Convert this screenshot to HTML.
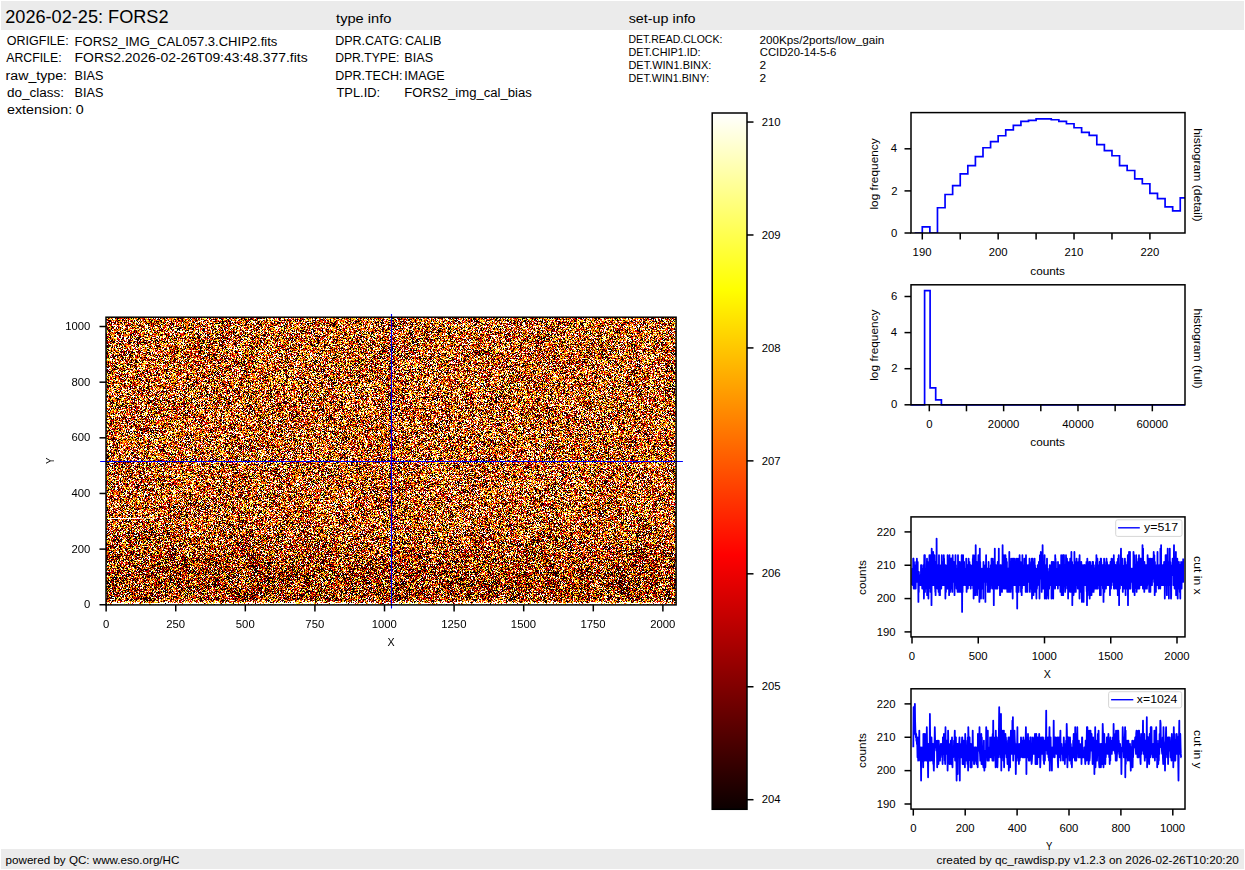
<!DOCTYPE html>
<html><head><meta charset="utf-8"><style>
html,body{margin:0;padding:0;background:#fff;width:1245px;height:870px;overflow:hidden}
svg{display:block;font-family:"Liberation Sans",sans-serif}
</style></head><body>
<svg width="1245" height="870" viewBox="0 0 1245 870">
<rect x="1" y="1" width="1243" height="29" fill="#ebebeb"/>
<rect x="1" y="849" width="1243" height="20" fill="#ebebeb"/>
<text x="5.25" y="23.10" font-size="17.50" textLength="163.28" lengthAdjust="spacingAndGlyphs" fill="#000">2026-02-25: FORS2</text>
<text x="336.09" y="22.70" font-size="13.12" textLength="55.34" lengthAdjust="spacingAndGlyphs" fill="#000">type info</text>
<text x="628.71" y="23.00" font-size="13.12" textLength="66.89" lengthAdjust="spacingAndGlyphs" fill="#000">set-up info</text>
<text x="6.81" y="45.20" font-size="13.12" textLength="61.85" lengthAdjust="spacingAndGlyphs" fill="#000">ORIGFILE:</text>
<text x="74.55" y="45.70" font-size="13.12" textLength="202.83" lengthAdjust="spacingAndGlyphs" fill="#000">FORS2_IMG_CAL057.3.CHIP2.fits</text>
<text x="6.28" y="61.70" font-size="13.12" textLength="55.29" lengthAdjust="spacingAndGlyphs" fill="#000">ARCFILE:</text>
<text x="74.55" y="61.70" font-size="13.12" textLength="233.10" lengthAdjust="spacingAndGlyphs" fill="#000">FORS2.2026-02-26T09:43:48.377.fits</text>
<text x="5.58" y="79.70" font-size="13.12" textLength="61.41" lengthAdjust="spacingAndGlyphs" fill="#000">raw_type:</text>
<text x="74.55" y="79.70" font-size="13.12" textLength="28.75" lengthAdjust="spacingAndGlyphs" fill="#000">BIAS</text>
<text x="7.01" y="97.10" font-size="13.12" textLength="57.08" lengthAdjust="spacingAndGlyphs" fill="#000">do_class:</text>
<text x="74.55" y="97.10" font-size="13.12" textLength="28.75" lengthAdjust="spacingAndGlyphs" fill="#000">BIAS</text>
<text x="7.01" y="113.50" font-size="13.12" textLength="65.15" lengthAdjust="spacingAndGlyphs" fill="#000">extension:</text>
<text x="75.89" y="113.50" font-size="13.12" textLength="7.95" lengthAdjust="spacingAndGlyphs" fill="#000">0</text>
<text x="335.15" y="45.00" font-size="13.12" textLength="67.22" lengthAdjust="spacingAndGlyphs" fill="#000">DPR.CATG:</text>
<text x="404.91" y="45.00" font-size="13.12" textLength="36.50" lengthAdjust="spacingAndGlyphs" fill="#000">CALIB</text>
<text x="335.15" y="61.80" font-size="13.12" textLength="64.30" lengthAdjust="spacingAndGlyphs" fill="#000">DPR.TYPE:</text>
<text x="404.35" y="61.80" font-size="13.12" textLength="28.75" lengthAdjust="spacingAndGlyphs" fill="#000">BIAS</text>
<text x="335.15" y="79.50" font-size="13.12" textLength="67.25" lengthAdjust="spacingAndGlyphs" fill="#000">DPR.TECH:</text>
<text x="404.35" y="79.50" font-size="13.12" textLength="40.39" lengthAdjust="spacingAndGlyphs" fill="#000">IMAGE</text>
<text x="336.46" y="96.90" font-size="13.12" textLength="43.63" lengthAdjust="spacingAndGlyphs" fill="#000">TPL.ID:</text>
<text x="404.35" y="97.40" font-size="13.12" textLength="127.52" lengthAdjust="spacingAndGlyphs" fill="#000">FORS2_img_cal_bias</text>
<text x="628.46" y="42.70" font-size="10.94" textLength="93.87" lengthAdjust="spacingAndGlyphs" fill="#000">DET.READ.CLOCK:</text>
<text x="759.52" y="43.80" font-size="10.94" textLength="124.71" lengthAdjust="spacingAndGlyphs" fill="#000">200Kps/2ports/low_gain</text>
<text x="628.46" y="55.90" font-size="10.94" textLength="72.07" lengthAdjust="spacingAndGlyphs" fill="#000">DET.CHIP1.ID:</text>
<text x="759.73" y="55.60" font-size="10.94" textLength="76.71" lengthAdjust="spacingAndGlyphs" fill="#000">CCID20-14-5-6</text>
<text x="628.46" y="68.80" font-size="10.94" textLength="82.83" lengthAdjust="spacingAndGlyphs" fill="#000">DET.WIN1.BINX:</text>
<text x="759.52" y="68.80" font-size="10.94" textLength="6.63" lengthAdjust="spacingAndGlyphs" fill="#000">2</text>
<text x="628.46" y="81.70" font-size="10.94" textLength="80.67" lengthAdjust="spacingAndGlyphs" fill="#000">DET.WIN1.BINY:</text>
<text x="759.52" y="81.70" font-size="10.94" textLength="6.63" lengthAdjust="spacingAndGlyphs" fill="#000">2</text>
<text x="5.55" y="863.80" font-size="11.08" textLength="173.83" lengthAdjust="spacingAndGlyphs" fill="#000">powered by QC: www.eso.org/HC</text>
<text x="936.55" y="863.80" font-size="10.92" textLength="302.23" lengthAdjust="spacingAndGlyphs" fill="#000">created by qc_rawdisp.py v1.2.3 on 2026-02-26T10:20:20</text>
<defs><linearGradient id="hmfb" x1="0" y1="0" x2="0" y2="1"><stop offset="0" stop-color="rgb(183,108,56)"/><stop offset="0.70" stop-color="rgb(182,108,56)"/><stop offset="0.77" stop-color="rgb(171,97,48)"/><stop offset="0.84" stop-color="rgb(161,85,39)"/><stop offset="0.89" stop-color="rgb(154,80,36)"/><stop offset="0.97" stop-color="rgb(157,82,37)"/><stop offset="1" stop-color="rgb(200,140,92)"/></linearGradient></defs>
<rect x="106" y="317" width="570" height="288" fill="url(#hmfb)"/>
<foreignObject x="106" y="317" width="570" height="288"><canvas id="hm" width="570" height="288" style="display:block;width:570px;height:288px"></canvas></foreignObject>
<line x1="107" y1="518.5" x2="140" y2="518.5" stroke="#fff" stroke-width="1"/><line x1="140" y1="518.5" x2="157" y2="518.5" stroke="#fff" stroke-opacity="0.5" stroke-width="1"/>
<line x1="391.50" y1="314.00" x2="391.50" y2="608.60" stroke="#0000ff" stroke-width="1.1"/>
<line x1="100.10" y1="461.50" x2="682.90" y2="461.50" stroke="#0000ff" stroke-width="1.1"/>
<rect x="106.0" y="317.2" width="570.10" height="287.70" fill="none" stroke="#000" stroke-width="1.5"/>
<line x1="106.14" y1="604.90" x2="106.14" y2="611.40" stroke="#000" stroke-width="1.5"/>
<text x="103.00" y="628.00" font-size="10.40" textLength="6.30" lengthAdjust="spacingAndGlyphs" fill="#000">0</text>
<line x1="175.73" y1="604.90" x2="175.73" y2="611.40" stroke="#000" stroke-width="1.5"/>
<text x="166.23" y="628.00" font-size="10.40" textLength="18.90" lengthAdjust="spacingAndGlyphs" fill="#000">250</text>
<line x1="245.32" y1="604.90" x2="245.32" y2="611.40" stroke="#000" stroke-width="1.5"/>
<text x="235.82" y="628.00" font-size="10.40" textLength="18.90" lengthAdjust="spacingAndGlyphs" fill="#000">500</text>
<line x1="314.92" y1="604.90" x2="314.92" y2="611.40" stroke="#000" stroke-width="1.5"/>
<text x="305.39" y="628.00" font-size="10.40" textLength="18.90" lengthAdjust="spacingAndGlyphs" fill="#000">750</text>
<line x1="384.51" y1="604.90" x2="384.51" y2="611.40" stroke="#000" stroke-width="1.5"/>
<text x="371.69" y="628.00" font-size="10.40" textLength="25.20" lengthAdjust="spacingAndGlyphs" fill="#000">1000</text>
<line x1="454.10" y1="604.90" x2="454.10" y2="611.40" stroke="#000" stroke-width="1.5"/>
<text x="441.28" y="628.00" font-size="10.40" textLength="25.20" lengthAdjust="spacingAndGlyphs" fill="#000">1250</text>
<line x1="523.69" y1="604.90" x2="523.69" y2="611.40" stroke="#000" stroke-width="1.5"/>
<text x="510.87" y="628.00" font-size="10.40" textLength="25.20" lengthAdjust="spacingAndGlyphs" fill="#000">1500</text>
<line x1="593.29" y1="604.90" x2="593.29" y2="611.40" stroke="#000" stroke-width="1.5"/>
<text x="580.46" y="628.00" font-size="10.40" textLength="25.20" lengthAdjust="spacingAndGlyphs" fill="#000">1750</text>
<line x1="662.88" y1="604.90" x2="662.88" y2="611.40" stroke="#000" stroke-width="1.5"/>
<text x="650.23" y="628.00" font-size="10.40" textLength="25.20" lengthAdjust="spacingAndGlyphs" fill="#000">2000</text>
<line x1="99.50" y1="604.76" x2="106.00" y2="604.76" stroke="#000" stroke-width="1.5"/>
<text x="84.06" y="608.41" font-size="10.40" textLength="6.30" lengthAdjust="spacingAndGlyphs" fill="#000">0</text>
<line x1="99.50" y1="549.11" x2="106.00" y2="549.11" stroke="#000" stroke-width="1.5"/>
<text x="71.43" y="552.76" font-size="10.40" textLength="18.90" lengthAdjust="spacingAndGlyphs" fill="#000">200</text>
<line x1="99.50" y1="493.46" x2="106.00" y2="493.46" stroke="#000" stroke-width="1.5"/>
<text x="71.43" y="497.11" font-size="10.40" textLength="18.90" lengthAdjust="spacingAndGlyphs" fill="#000">400</text>
<line x1="99.50" y1="437.82" x2="106.00" y2="437.82" stroke="#000" stroke-width="1.5"/>
<text x="71.43" y="441.47" font-size="10.40" textLength="18.90" lengthAdjust="spacingAndGlyphs" fill="#000">600</text>
<line x1="99.50" y1="382.17" x2="106.00" y2="382.17" stroke="#000" stroke-width="1.5"/>
<text x="71.43" y="385.82" font-size="10.40" textLength="18.90" lengthAdjust="spacingAndGlyphs" fill="#000">800</text>
<line x1="99.50" y1="326.52" x2="106.00" y2="326.52" stroke="#000" stroke-width="1.5"/>
<text x="65.15" y="330.17" font-size="10.40" textLength="25.20" lengthAdjust="spacingAndGlyphs" fill="#000">1000</text>
<text x="387.44" y="646.30" font-size="10.92" textLength="7.12" lengthAdjust="spacingAndGlyphs" fill="#000">X</text>
<text transform="translate(54.00,460.80) rotate(-90)" x="-3.17" y="0" font-size="10.92" textLength="6.35" lengthAdjust="spacingAndGlyphs" fill="#000">Y</text>
<defs><linearGradient id="hot" x1="0" y1="1" x2="0" y2="0"><stop offset="0" stop-color="rgb(11,0,0)"/><stop offset="0.365079" stop-color="rgb(255,0,0)"/><stop offset="0.746032" stop-color="rgb(255,255,0)"/><stop offset="1" stop-color="rgb(255,255,255)"/></linearGradient></defs>
<rect x="712.2" y="113.0" width="34.80" height="696.30" fill="url(#hot)" stroke="#000" stroke-width="1.5"/>
<line x1="747.00" y1="799.70" x2="753.50" y2="799.70" stroke="#000" stroke-width="1.5"/>
<text x="761.76" y="803.35" font-size="10.40" textLength="18.90" lengthAdjust="spacingAndGlyphs" fill="#000">204</text>
<line x1="747.00" y1="686.76" x2="753.50" y2="686.76" stroke="#000" stroke-width="1.5"/>
<text x="761.76" y="690.41" font-size="10.40" textLength="18.90" lengthAdjust="spacingAndGlyphs" fill="#000">205</text>
<line x1="747.00" y1="573.81" x2="753.50" y2="573.81" stroke="#000" stroke-width="1.5"/>
<text x="761.76" y="577.46" font-size="10.40" textLength="18.90" lengthAdjust="spacingAndGlyphs" fill="#000">206</text>
<line x1="747.00" y1="460.87" x2="753.50" y2="460.87" stroke="#000" stroke-width="1.5"/>
<text x="761.76" y="464.52" font-size="10.40" textLength="18.90" lengthAdjust="spacingAndGlyphs" fill="#000">207</text>
<line x1="747.00" y1="347.92" x2="753.50" y2="347.92" stroke="#000" stroke-width="1.5"/>
<text x="761.76" y="351.57" font-size="10.40" textLength="18.90" lengthAdjust="spacingAndGlyphs" fill="#000">208</text>
<line x1="747.00" y1="234.98" x2="753.50" y2="234.98" stroke="#000" stroke-width="1.5"/>
<text x="761.76" y="238.63" font-size="10.40" textLength="18.90" lengthAdjust="spacingAndGlyphs" fill="#000">209</text>
<line x1="747.00" y1="122.04" x2="753.50" y2="122.04" stroke="#000" stroke-width="1.5"/>
<text x="761.76" y="125.69" font-size="10.40" textLength="18.90" lengthAdjust="spacingAndGlyphs" fill="#000">210</text>
<svg x="911.0" y="112.6" width="274.0" height="120.40" viewBox="911.0 112.6 274.0 120.40" overflow="hidden"><path d="M914.71,233.00 V233.00 H922.29 V226.90 H929.88 V233.00 H937.47 V207.74 H945.06 V194.48 H952.64 V185.64 H960.23 V173.85 H967.82 V165.64 H975.40 V156.59 H982.99 V147.75 H990.58 V141.64 H998.16 V135.75 H1005.75 V129.85 H1013.34 V125.43 H1020.93 V121.44 H1028.51 V120.38 H1036.10 V118.91 H1043.69 V118.91 H1051.27 V119.75 H1058.86 V121.44 H1066.45 V123.75 H1074.03 V127.75 H1081.62 V132.38 H1089.21 V135.33 H1096.80 V144.59 H1104.38 V150.69 H1111.97 V155.75 H1119.56 V165.64 H1127.14 V170.48 H1134.73 V178.90 H1142.32 V183.74 H1149.90 V193.43 H1157.49 V198.69 H1165.08 V206.90 H1172.67 V210.90 H1180.25 V197.85 H1187.84 V203.53 H1195.43" fill="none" stroke="#0000ff" stroke-width="1.7" stroke-linejoin="miter"/></svg>
<rect x="911.0" y="112.6" width="274.0" height="120.40" fill="none" stroke="#000" stroke-width="1.5"/>
<line x1="922.29" y1="233.00" x2="922.29" y2="239.50" stroke="#000" stroke-width="1.5"/>
<text x="912.62" y="256.10" font-size="10.40" textLength="18.90" lengthAdjust="spacingAndGlyphs" fill="#000">190</text>
<line x1="960.23" y1="233.00" x2="960.23" y2="239.50" stroke="#000" stroke-width="1.5"/>
<line x1="998.16" y1="233.00" x2="998.16" y2="239.50" stroke="#000" stroke-width="1.5"/>
<text x="988.66" y="256.10" font-size="10.40" textLength="18.90" lengthAdjust="spacingAndGlyphs" fill="#000">200</text>
<line x1="1036.10" y1="233.00" x2="1036.10" y2="239.50" stroke="#000" stroke-width="1.5"/>
<line x1="1074.03" y1="233.00" x2="1074.03" y2="239.50" stroke="#000" stroke-width="1.5"/>
<text x="1064.53" y="256.10" font-size="10.40" textLength="18.90" lengthAdjust="spacingAndGlyphs" fill="#000">210</text>
<line x1="1111.97" y1="233.00" x2="1111.97" y2="239.50" stroke="#000" stroke-width="1.5"/>
<line x1="1149.90" y1="233.00" x2="1149.90" y2="239.50" stroke="#000" stroke-width="1.5"/>
<text x="1140.40" y="256.10" font-size="10.40" textLength="18.90" lengthAdjust="spacingAndGlyphs" fill="#000">220</text>
<line x1="904.50" y1="233.00" x2="911.00" y2="233.00" stroke="#000" stroke-width="1.5"/>
<text x="890.96" y="236.65" font-size="10.40" textLength="6.30" lengthAdjust="spacingAndGlyphs" fill="#000">0</text>
<line x1="904.50" y1="190.90" x2="911.00" y2="190.90" stroke="#000" stroke-width="1.5"/>
<text x="891.30" y="194.55" font-size="10.40" textLength="6.30" lengthAdjust="spacingAndGlyphs" fill="#000">2</text>
<line x1="904.50" y1="148.80" x2="911.00" y2="148.80" stroke="#000" stroke-width="1.5"/>
<text x="890.86" y="152.45" font-size="10.40" textLength="6.30" lengthAdjust="spacingAndGlyphs" fill="#000">4</text>
<text x="1030.28" y="274.50" font-size="10.92" textLength="34.76" lengthAdjust="spacingAndGlyphs" fill="#000">counts</text>
<text transform="translate(877.80,173.60) rotate(-90)" x="-35.98" y="0" font-size="10.92" textLength="71.32" lengthAdjust="spacingAndGlyphs" fill="#000">log frequency</text>
<text transform="translate(1194.30,175.00) rotate(90)" x="-46.72" y="0" font-size="10.92" textLength="93.37" lengthAdjust="spacingAndGlyphs" fill="#000">histogram (detail)</text>
<path d="M911.00,404.80 H924.6 V290.72 H930.1 V387.83 H935.7 V399.93 H941.4 V404.80 H1185.0" fill="none" stroke="#0000ff" stroke-width="1.7"/>
<rect x="911.0" y="284.8" width="274.0" height="120.00" fill="none" stroke="#000" stroke-width="1.5"/>
<line x1="929.30" y1="404.80" x2="929.30" y2="411.30" stroke="#000" stroke-width="1.5"/>
<text x="926.16" y="428.20" font-size="10.40" textLength="6.30" lengthAdjust="spacingAndGlyphs" fill="#000">0</text>
<line x1="966.47" y1="404.80" x2="966.47" y2="411.30" stroke="#000" stroke-width="1.5"/>
<line x1="1003.64" y1="404.80" x2="1003.64" y2="411.30" stroke="#000" stroke-width="1.5"/>
<text x="987.85" y="428.20" font-size="10.40" textLength="31.49" lengthAdjust="spacingAndGlyphs" fill="#000">20000</text>
<line x1="1040.81" y1="404.80" x2="1040.81" y2="411.30" stroke="#000" stroke-width="1.5"/>
<line x1="1077.98" y1="404.80" x2="1077.98" y2="411.30" stroke="#000" stroke-width="1.5"/>
<text x="1062.31" y="428.20" font-size="10.40" textLength="31.49" lengthAdjust="spacingAndGlyphs" fill="#000">40000</text>
<line x1="1115.15" y1="404.80" x2="1115.15" y2="411.30" stroke="#000" stroke-width="1.5"/>
<line x1="1152.32" y1="404.80" x2="1152.32" y2="411.30" stroke="#000" stroke-width="1.5"/>
<text x="1136.55" y="428.20" font-size="10.40" textLength="31.49" lengthAdjust="spacingAndGlyphs" fill="#000">60000</text>
<line x1="904.50" y1="404.80" x2="911.00" y2="404.80" stroke="#000" stroke-width="1.5"/>
<text x="890.96" y="408.45" font-size="10.40" textLength="6.30" lengthAdjust="spacingAndGlyphs" fill="#000">0</text>
<line x1="904.50" y1="368.70" x2="911.00" y2="368.70" stroke="#000" stroke-width="1.5"/>
<text x="891.30" y="372.35" font-size="10.40" textLength="6.30" lengthAdjust="spacingAndGlyphs" fill="#000">2</text>
<line x1="904.50" y1="332.60" x2="911.00" y2="332.60" stroke="#000" stroke-width="1.5"/>
<text x="890.86" y="336.25" font-size="10.40" textLength="6.30" lengthAdjust="spacingAndGlyphs" fill="#000">4</text>
<line x1="904.50" y1="296.50" x2="911.00" y2="296.50" stroke="#000" stroke-width="1.5"/>
<text x="890.91" y="300.15" font-size="10.40" textLength="6.30" lengthAdjust="spacingAndGlyphs" fill="#000">6</text>
<text x="1030.28" y="446.30" font-size="10.92" textLength="34.76" lengthAdjust="spacingAndGlyphs" fill="#000">counts</text>
<text transform="translate(877.80,344.80) rotate(-90)" x="-35.98" y="0" font-size="10.92" textLength="71.32" lengthAdjust="spacingAndGlyphs" fill="#000">log frequency</text>
<text transform="translate(1194.30,348.50) rotate(90)" x="-40.12" y="0" font-size="10.92" textLength="80.18" lengthAdjust="spacingAndGlyphs" fill="#000">histogram (full)</text>
<svg x="911.0" y="516.9" width="274.0" height="120.00" viewBox="911.0 516.9 274.0 120.00" overflow="hidden"><polyline points="912.0,585.2 912.1,581.9 912.3,568.6 912.4,571.9 912.5,578.6 912.7,581.9 912.8,575.2 912.9,585.2 913.1,571.9 913.2,558.6 913.3,581.9 913.5,558.6 913.6,571.9 913.7,588.6 913.9,578.6 914.0,561.9 914.1,571.9 914.3,581.9 914.4,568.6 914.5,585.2 914.6,588.6 914.8,585.2 914.9,581.9 915.0,578.6 915.2,581.9 915.3,565.2 915.4,585.2 915.6,588.6 915.7,588.6 915.8,575.2 916.0,565.2 916.1,571.9 916.2,561.9 916.4,568.6 916.5,565.2 916.6,561.9 916.8,575.2 916.9,558.6 917.0,575.2 917.2,581.9 917.3,578.6 917.4,571.9 917.6,581.9 917.7,561.9 917.8,581.9 918.0,581.9 918.1,581.9 918.2,578.6 918.4,601.9 918.5,571.9 918.6,581.9 918.8,591.9 918.9,571.9 919.0,585.2 919.2,581.9 919.3,578.6 919.4,585.2 919.6,585.2 919.7,575.2 919.8,575.2 920.0,581.9 920.1,581.9 920.2,581.9 920.3,581.9 920.5,575.2 920.6,585.2 920.7,575.2 920.9,581.9 921.0,565.2 921.1,585.2 921.3,565.2 921.4,585.2 921.5,568.6 921.7,571.9 921.8,585.2 921.9,568.6 922.1,581.9 922.2,588.6 922.3,571.9 922.5,575.2 922.6,571.9 922.7,585.2 922.9,581.9 923.0,571.9 923.1,588.6 923.3,565.2 923.4,578.6 923.5,571.9 923.7,581.9 923.8,585.2 923.9,598.6 924.1,585.2 924.2,565.2 924.3,555.2 924.5,578.6 924.6,578.6 924.7,581.9 924.9,555.2 925.0,591.9 925.1,578.6 925.2,585.2 925.4,581.9 925.5,568.6 925.6,585.2 925.8,575.2 925.9,578.6 926.0,575.2 926.2,581.9 926.3,581.9 926.4,581.9 926.6,588.6 926.7,575.2 926.8,565.2 927.0,558.6 927.1,595.2 927.2,561.9 927.4,588.6 927.5,568.6 927.6,561.9 927.8,585.2 927.9,581.9 928.0,578.6 928.2,578.6 928.3,575.2 928.4,598.6 928.6,578.6 928.7,565.2 928.8,588.6 929.0,575.2 929.1,575.2 929.2,568.6 929.4,555.2 929.5,571.9 929.6,581.9 929.8,571.9 929.9,578.6 930.0,568.6 930.2,571.9 930.3,555.2 930.4,565.2 930.5,591.9 930.7,581.9 930.8,565.2 930.9,571.9 931.1,581.9 931.2,591.9 931.3,568.6 931.5,605.2 931.6,588.6 931.7,548.6 931.9,568.6 932.0,565.2 932.1,575.2 932.3,585.2 932.4,575.2 932.5,578.6 932.7,585.2 932.8,585.2 932.9,581.9 933.1,558.6 933.2,551.9 933.3,571.9 933.5,568.6 933.6,568.6 933.7,575.2 933.9,585.2 934.0,565.2 934.1,565.2 934.3,571.9 934.4,561.9 934.5,555.2 934.7,575.2 934.8,568.6 934.9,571.9 935.1,588.6 935.2,581.9 935.3,591.9 935.5,561.9 935.6,595.2 935.7,575.2 935.9,585.2 936.0,585.2 936.1,585.2 936.2,565.2 936.4,575.2 936.5,581.9 936.6,538.6 936.8,575.2 936.9,581.9 937.0,578.6 937.2,571.9 937.3,588.6 937.4,568.6 937.6,565.2 937.7,575.2 937.8,578.6 938.0,585.2 938.1,578.6 938.2,568.6 938.4,578.6 938.5,571.9 938.6,591.9 938.8,585.2 938.9,585.2 939.0,555.2 939.2,591.9 939.3,585.2 939.4,595.2 939.6,571.9 939.7,571.9 939.8,578.6 940.0,595.2 940.1,578.6 940.2,585.2 940.4,578.6 940.5,578.6 940.6,585.2 940.8,565.2 940.9,571.9 941.0,578.6 941.1,578.6 941.3,588.6 941.4,571.9 941.5,575.2 941.7,561.9 941.8,555.2 941.9,568.6 942.1,565.2 942.2,575.2 942.3,578.6 942.5,575.2 942.6,575.2 942.7,565.2 942.9,585.2 943.0,571.9 943.1,561.9 943.3,585.2 943.4,581.9 943.5,565.2 943.7,571.9 943.8,555.2 943.9,571.9 944.1,558.6 944.2,565.2 944.3,571.9 944.5,585.2 944.6,585.2 944.7,565.2 944.9,581.9 945.0,571.9 945.1,578.6 945.3,578.6 945.4,598.6 945.5,565.2 945.7,581.9 945.8,581.9 945.9,591.9 946.1,571.9 946.2,568.6 946.3,575.2 946.5,575.2 946.6,568.6 946.7,588.6 946.8,575.2 947.0,568.6 947.1,578.6 947.2,565.2 947.4,578.6 947.5,588.6 947.6,555.2 947.8,578.6 947.9,568.6 948.0,588.6 948.2,568.6 948.3,585.2 948.4,588.6 948.6,581.9 948.7,578.6 948.8,575.2 949.0,578.6 949.1,595.2 949.2,575.2 949.4,568.6 949.5,555.2 949.6,575.2 949.8,561.9 949.9,558.6 950.0,585.2 950.2,591.9 950.3,585.2 950.4,568.6 950.6,581.9 950.7,588.6 950.8,558.6 951.0,571.9 951.1,558.6 951.2,581.9 951.4,585.2 951.5,588.6 951.6,558.6 951.8,585.2 951.9,568.6 952.0,585.2 952.1,565.2 952.3,591.9 952.4,578.6 952.5,578.6 952.7,555.2 952.8,561.9 952.9,578.6 953.1,578.6 953.2,568.6 953.3,571.9 953.5,561.9 953.6,571.9 953.7,575.2 953.9,561.9 954.0,581.9 954.1,578.6 954.3,578.6 954.4,575.2 954.5,595.2 954.7,578.6 954.8,581.9 954.9,581.9 955.1,581.9 955.2,568.6 955.3,578.6 955.5,555.2 955.6,578.6 955.7,571.9 955.9,581.9 956.0,565.2 956.1,585.2 956.3,581.9 956.4,581.9 956.5,588.6 956.7,568.6 956.8,578.6 956.9,588.6 957.0,575.2 957.2,575.2 957.3,575.2 957.4,571.9 957.6,591.9 957.7,575.2 957.8,591.9 958.0,555.2 958.1,571.9 958.2,585.2 958.4,561.9 958.5,585.2 958.6,578.6 958.8,591.9 958.9,578.6 959.0,568.6 959.2,588.6 959.3,568.6 959.4,578.6 959.6,568.6 959.7,585.2 959.8,561.9 960.0,568.6 960.1,591.9 960.2,575.2 960.4,591.9 960.5,568.6 960.6,578.6 960.8,568.6 960.9,565.2 961.0,585.2 961.2,568.6 961.3,578.6 961.4,578.6 961.6,571.9 961.7,555.2 961.8,571.9 962.0,585.2 962.1,611.9 962.2,588.6 962.4,581.9 962.5,591.9 962.6,591.9 962.7,558.6 962.9,585.2 963.0,581.9 963.1,555.2 963.3,575.2 963.4,571.9 963.5,581.9 963.7,571.9 963.8,585.2 963.9,578.6 964.1,561.9 964.2,568.6 964.3,578.6 964.5,578.6 964.6,568.6 964.7,578.6 964.9,578.6 965.0,575.2 965.1,575.2 965.3,578.6 965.4,571.9 965.5,585.2 965.7,568.6 965.8,585.2 965.9,568.6 966.1,575.2 966.2,558.6 966.3,578.6 966.5,571.9 966.6,591.9 966.7,581.9 966.9,585.2 967.0,571.9 967.1,588.6 967.3,575.2 967.4,581.9 967.5,585.2 967.6,565.2 967.8,581.9 967.9,588.6 968.0,578.6 968.2,585.2 968.3,571.9 968.4,571.9 968.6,558.6 968.7,565.2 968.8,581.9 969.0,565.2 969.1,581.9 969.2,565.2 969.4,585.2 969.5,561.9 969.6,575.2 969.8,578.6 969.9,578.6 970.0,578.6 970.2,585.2 970.3,571.9 970.4,578.6 970.6,565.2 970.7,588.6 970.8,578.6 971.0,575.2 971.1,568.6 971.2,571.9 971.4,578.6 971.5,568.6 971.6,571.9 971.8,578.6 971.9,578.6 972.0,578.6 972.2,568.6 972.3,585.2 972.4,565.2 972.6,575.2 972.7,578.6 972.8,558.6 973.0,558.6 973.1,555.2 973.2,588.6 973.3,575.2 973.5,561.9 973.6,598.6 973.7,581.9 973.9,578.6 974.0,581.9 974.1,575.2 974.3,575.2 974.4,565.2 974.5,581.9 974.7,568.6 974.8,575.2 974.9,555.2 975.1,565.2 975.2,595.2 975.3,578.6 975.5,581.9 975.6,575.2 975.7,545.2 975.9,575.2 976.0,591.9 976.1,568.6 976.3,585.2 976.4,578.6 976.5,571.9 976.7,561.9 976.8,581.9 976.9,571.9 977.1,595.2 977.2,591.9 977.3,578.6 977.5,575.2 977.6,581.9 977.7,568.6 977.9,581.9 978.0,581.9 978.1,571.9 978.2,571.9 978.4,555.2 978.5,588.6 978.6,588.6 978.8,565.2 978.9,581.9 979.0,561.9 979.2,575.2 979.3,571.9 979.4,601.9 979.6,575.2 979.7,565.2 979.8,548.6 980.0,578.6 980.1,585.2 980.2,561.9 980.4,578.6 980.5,578.6 980.6,578.6 980.8,575.2 980.9,591.9 981.0,598.6 981.2,568.6 981.3,571.9 981.4,578.6 981.6,571.9 981.7,571.9 981.8,581.9 982.0,578.6 982.1,581.9 982.2,588.6 982.4,575.2 982.5,568.6 982.6,571.9 982.8,581.9 982.9,571.9 983.0,578.6 983.2,578.6 983.3,598.6 983.4,568.6 983.5,561.9 983.7,581.9 983.8,578.6 983.9,575.2 984.1,578.6 984.2,578.6 984.3,568.6 984.5,571.9 984.6,581.9 984.7,571.9 984.9,571.9 985.0,578.6 985.1,581.9 985.3,565.2 985.4,601.9 985.5,568.6 985.7,568.6 985.8,585.2 985.9,575.2 986.1,555.2 986.2,581.9 986.3,571.9 986.5,578.6 986.6,578.6 986.7,568.6 986.9,575.2 987.0,581.9 987.1,568.6 987.3,575.2 987.4,581.9 987.5,575.2 987.7,568.6 987.8,591.9 987.9,585.2 988.1,578.6 988.2,581.9 988.3,575.2 988.5,591.9 988.6,561.9 988.7,568.6 988.9,578.6 989.0,585.2 989.1,591.9 989.2,568.6 989.4,575.2 989.5,578.6 989.6,581.9 989.8,591.9 989.9,568.6 990.0,585.2 990.2,581.9 990.3,585.2 990.4,575.2 990.6,581.9 990.7,588.6 990.8,565.2 991.0,585.2 991.1,585.2 991.2,568.6 991.4,578.6 991.5,558.6 991.6,561.9 991.8,575.2 991.9,585.2 992.0,581.9 992.2,571.9 992.3,581.9 992.4,575.2 992.6,588.6 992.7,575.2 992.8,558.6 993.0,571.9 993.1,581.9 993.2,588.6 993.4,575.2 993.5,575.2 993.6,568.6 993.8,605.2 993.9,585.2 994.0,571.9 994.1,575.2 994.3,571.9 994.4,561.9 994.5,568.6 994.7,571.9 994.8,548.6 994.9,581.9 995.1,581.9 995.2,581.9 995.3,571.9 995.5,588.6 995.6,578.6 995.7,581.9 995.9,588.6 996.0,565.2 996.1,565.2 996.3,581.9 996.4,588.6 996.5,571.9 996.7,585.2 996.8,575.2 996.9,578.6 997.1,565.2 997.2,581.9 997.3,575.2 997.5,588.6 997.6,578.6 997.7,561.9 997.9,585.2 998.0,568.6 998.1,578.6 998.3,575.2 998.4,561.9 998.5,561.9 998.7,578.6 998.8,548.6 998.9,581.9 999.1,585.2 999.2,571.9 999.3,575.2 999.5,575.2 999.6,581.9 999.7,578.6 999.8,575.2 1000.0,595.2 1000.1,591.9 1000.2,595.2 1000.4,565.2 1000.5,571.9 1000.6,581.9 1000.8,575.2 1000.9,565.2 1001.0,588.6 1001.2,585.2 1001.3,581.9 1001.4,578.6 1001.6,578.6 1001.7,565.2 1001.8,575.2 1002.0,591.9 1002.1,581.9 1002.2,575.2 1002.4,568.6 1002.5,571.9 1002.6,545.2 1002.8,581.9 1002.9,571.9 1003.0,558.6 1003.2,578.6 1003.3,585.2 1003.4,585.2 1003.6,578.6 1003.7,588.6 1003.8,575.2 1004.0,555.2 1004.1,565.2 1004.2,575.2 1004.4,558.6 1004.5,571.9 1004.6,588.6 1004.8,571.9 1004.9,575.2 1005.0,571.9 1005.1,581.9 1005.3,568.6 1005.4,575.2 1005.5,555.2 1005.7,588.6 1005.8,575.2 1005.9,565.2 1006.1,585.2 1006.2,568.6 1006.3,558.6 1006.5,568.6 1006.6,571.9 1006.7,585.2 1006.9,561.9 1007.0,588.6 1007.1,578.6 1007.3,591.9 1007.4,578.6 1007.5,568.6 1007.7,575.2 1007.8,585.2 1007.9,571.9 1008.1,568.6 1008.2,581.9 1008.3,581.9 1008.5,585.2 1008.6,578.6 1008.7,591.9 1008.9,578.6 1009.0,588.6 1009.1,581.9 1009.3,551.9 1009.4,591.9 1009.5,581.9 1009.7,578.6 1009.8,565.2 1009.9,588.6 1010.0,561.9 1010.2,568.6 1010.3,561.9 1010.4,565.2 1010.6,575.2 1010.7,591.9 1010.8,561.9 1011.0,575.2 1011.1,585.2 1011.2,558.6 1011.4,585.2 1011.5,585.2 1011.6,571.9 1011.8,568.6 1011.9,588.6 1012.0,578.6 1012.2,578.6 1012.3,578.6 1012.4,575.2 1012.6,578.6 1012.7,598.6 1012.8,558.6 1013.0,575.2 1013.1,571.9 1013.2,571.9 1013.4,558.6 1013.5,575.2 1013.6,578.6 1013.8,568.6 1013.9,585.2 1014.0,575.2 1014.2,568.6 1014.3,575.2 1014.4,565.2 1014.6,585.2 1014.7,565.2 1014.8,558.6 1015.0,565.2 1015.1,578.6 1015.2,585.2 1015.4,575.2 1015.5,581.9 1015.6,571.9 1015.7,581.9 1015.9,568.6 1016.0,578.6 1016.1,575.2 1016.3,561.9 1016.4,578.6 1016.5,591.9 1016.7,558.6 1016.8,585.2 1016.9,581.9 1017.1,568.6 1017.2,608.6 1017.3,568.6 1017.5,575.2 1017.6,571.9 1017.7,581.9 1017.9,581.9 1018.0,558.6 1018.1,561.9 1018.3,571.9 1018.4,578.6 1018.5,588.6 1018.7,591.9 1018.8,581.9 1018.9,568.6 1019.1,581.9 1019.2,581.9 1019.3,575.2 1019.5,568.6 1019.6,555.2 1019.7,558.6 1019.9,575.2 1020.0,571.9 1020.1,581.9 1020.3,585.2 1020.4,571.9 1020.5,585.2 1020.6,561.9 1020.8,585.2 1020.9,571.9 1021.0,591.9 1021.2,571.9 1021.3,585.2 1021.4,571.9 1021.6,565.2 1021.7,595.2 1021.8,578.6 1022.0,588.6 1022.1,581.9 1022.2,578.6 1022.4,555.2 1022.5,578.6 1022.6,571.9 1022.8,581.9 1022.9,581.9 1023.0,578.6 1023.2,571.9 1023.3,575.2 1023.4,578.6 1023.6,585.2 1023.7,565.2 1023.8,575.2 1024.0,575.2 1024.1,568.6 1024.2,585.2 1024.4,558.6 1024.5,568.6 1024.6,568.6 1024.8,568.6 1024.9,585.2 1025.0,571.9 1025.2,581.9 1025.3,575.2 1025.4,561.9 1025.6,575.2 1025.7,591.9 1025.8,568.6 1026.0,555.2 1026.1,568.6 1026.2,571.9 1026.3,591.9 1026.5,581.9 1026.6,591.9 1026.7,578.6 1026.9,571.9 1027.0,565.2 1027.1,578.6 1027.3,578.6 1027.4,585.2 1027.5,591.9 1027.7,571.9 1027.8,578.6 1027.9,575.2 1028.1,571.9 1028.2,578.6 1028.3,565.2 1028.5,575.2 1028.6,575.2 1028.7,565.2 1028.9,581.9 1029.0,568.6 1029.1,581.9 1029.3,568.6 1029.4,571.9 1029.5,558.6 1029.7,575.2 1029.8,568.6 1029.9,591.9 1030.1,568.6 1030.2,575.2 1030.3,585.2 1030.5,568.6 1030.6,585.2 1030.7,575.2 1030.9,571.9 1031.0,588.6 1031.1,575.2 1031.2,588.6 1031.4,561.9 1031.5,585.2 1031.6,575.2 1031.8,558.6 1031.9,578.6 1032.0,598.6 1032.2,578.6 1032.3,575.2 1032.4,575.2 1032.6,558.6 1032.7,588.6 1032.8,588.6 1033.0,578.6 1033.1,578.6 1033.2,565.2 1033.4,585.2 1033.5,595.2 1033.6,571.9 1033.8,578.6 1033.9,591.9 1034.0,561.9 1034.2,591.9 1034.3,575.2 1034.4,578.6 1034.6,558.6 1034.7,578.6 1034.8,585.2 1035.0,565.2 1035.1,575.2 1035.2,585.2 1035.4,588.6 1035.5,571.9 1035.6,591.9 1035.8,578.6 1035.9,571.9 1036.0,568.6 1036.2,571.9 1036.3,585.2 1036.4,598.6 1036.5,571.9 1036.7,578.6 1036.8,575.2 1036.9,588.6 1037.1,585.2 1037.2,585.2 1037.3,571.9 1037.5,585.2 1037.6,585.2 1037.7,565.2 1037.9,578.6 1038.0,568.6 1038.1,575.2 1038.3,575.2 1038.4,578.6 1038.5,578.6 1038.7,578.6 1038.8,575.2 1038.9,561.9 1039.1,571.9 1039.2,575.2 1039.3,571.9 1039.5,598.6 1039.6,585.2 1039.7,578.6 1039.9,555.2 1040.0,568.6 1040.1,561.9 1040.3,575.2 1040.4,565.2 1040.5,578.6 1040.7,561.9 1040.8,551.9 1040.9,571.9 1041.1,575.2 1041.2,571.9 1041.3,558.6 1041.5,578.6 1041.6,571.9 1041.7,591.9 1041.8,575.2 1042.0,581.9 1042.1,568.6 1042.2,581.9 1042.4,571.9 1042.5,575.2 1042.6,545.2 1042.8,565.2 1042.9,588.6 1043.0,561.9 1043.2,568.6 1043.3,588.6 1043.4,568.6 1043.6,561.9 1043.7,581.9 1043.8,575.2 1044.0,585.2 1044.1,578.6 1044.2,575.2 1044.4,578.6 1044.5,585.2 1044.6,555.2 1044.8,598.6 1044.9,585.2 1045.0,581.9 1045.2,581.9 1045.3,591.9 1045.4,578.6 1045.6,581.9 1045.7,581.9 1045.8,588.6 1046.0,565.2 1046.1,568.6 1046.2,598.6 1046.4,595.2 1046.5,571.9 1046.6,581.9 1046.8,578.6 1046.9,575.2 1047.0,558.6 1047.2,588.6 1047.3,578.6 1047.4,568.6 1047.5,575.2 1047.7,578.6 1047.8,575.2 1047.9,595.2 1048.1,578.6 1048.2,571.9 1048.3,598.6 1048.5,575.2 1048.6,585.2 1048.7,585.2 1048.9,581.9 1049.0,585.2 1049.1,588.6 1049.3,581.9 1049.4,568.6 1049.5,575.2 1049.7,568.6 1049.8,565.2 1049.9,568.6 1050.1,585.2 1050.2,578.6 1050.3,581.9 1050.5,568.6 1050.6,571.9 1050.7,571.9 1050.9,565.2 1051.0,581.9 1051.1,581.9 1051.3,571.9 1051.4,565.2 1051.5,598.6 1051.7,561.9 1051.8,581.9 1051.9,581.9 1052.1,571.9 1052.2,561.9 1052.3,591.9 1052.5,578.6 1052.6,568.6 1052.7,575.2 1052.8,571.9 1053.0,568.6 1053.1,571.9 1053.2,598.6 1053.4,561.9 1053.5,581.9 1053.6,578.6 1053.8,565.2 1053.9,578.6 1054.0,578.6 1054.2,571.9 1054.3,578.6 1054.4,581.9 1054.6,575.2 1054.7,585.2 1054.8,578.6 1055.0,585.2 1055.1,588.6 1055.2,555.2 1055.4,565.2 1055.5,558.6 1055.6,578.6 1055.8,581.9 1055.9,561.9 1056.0,581.9 1056.2,578.6 1056.3,571.9 1056.4,585.2 1056.6,575.2 1056.7,568.6 1056.8,571.9 1057.0,581.9 1057.1,585.2 1057.2,578.6 1057.4,578.6 1057.5,581.9 1057.6,578.6 1057.8,578.6 1057.9,588.6 1058.0,561.9 1058.1,568.6 1058.3,571.9 1058.4,581.9 1058.5,575.2 1058.7,578.6 1058.8,585.2 1058.9,581.9 1059.1,575.2 1059.2,581.9 1059.3,571.9 1059.5,565.2 1059.6,568.6 1059.7,565.2 1059.9,565.2 1060.0,568.6 1060.1,575.2 1060.3,585.2 1060.4,591.9 1060.5,578.6 1060.7,588.6 1060.8,588.6 1060.9,581.9 1061.1,581.9 1061.2,555.2 1061.3,585.2 1061.5,571.9 1061.6,595.2 1061.7,565.2 1061.9,588.6 1062.0,578.6 1062.1,575.2 1062.3,568.6 1062.4,575.2 1062.5,581.9 1062.7,568.6 1062.8,585.2 1062.9,555.2 1063.0,571.9 1063.2,595.2 1063.3,558.6 1063.4,565.2 1063.6,585.2 1063.7,555.2 1063.8,578.6 1064.0,555.2 1064.1,575.2 1064.2,578.6 1064.4,578.6 1064.5,568.6 1064.6,568.6 1064.8,565.2 1064.9,568.6 1065.0,585.2 1065.2,591.9 1065.3,581.9 1065.4,581.9 1065.6,578.6 1065.7,575.2 1065.8,581.9 1066.0,555.2 1066.1,578.6 1066.2,585.2 1066.4,578.6 1066.5,578.6 1066.6,575.2 1066.8,585.2 1066.9,578.6 1067.0,558.6 1067.2,588.6 1067.3,568.6 1067.4,581.9 1067.6,581.9 1067.7,561.9 1067.8,578.6 1068.0,561.9 1068.1,598.6 1068.2,575.2 1068.3,591.9 1068.5,575.2 1068.6,568.6 1068.7,585.2 1068.9,585.2 1069.0,565.2 1069.1,568.6 1069.3,575.2 1069.4,575.2 1069.5,585.2 1069.7,575.2 1069.8,561.9 1069.9,578.6 1070.1,591.9 1070.2,558.6 1070.3,568.6 1070.5,591.9 1070.6,578.6 1070.7,585.2 1070.9,565.2 1071.0,571.9 1071.1,561.9 1071.3,578.6 1071.4,551.9 1071.5,591.9 1071.7,585.2 1071.8,568.6 1071.9,575.2 1072.1,561.9 1072.2,578.6 1072.3,605.2 1072.5,578.6 1072.6,588.6 1072.7,585.2 1072.9,585.2 1073.0,585.2 1073.1,578.6 1073.3,575.2 1073.4,565.2 1073.5,595.2 1073.7,591.9 1073.8,581.9 1073.9,578.6 1074.0,588.6 1074.2,568.6 1074.3,581.9 1074.4,551.9 1074.6,571.9 1074.7,591.9 1074.8,561.9 1075.0,578.6 1075.1,568.6 1075.2,568.6 1075.4,581.9 1075.5,575.2 1075.6,591.9 1075.8,591.9 1075.9,581.9 1076.0,561.9 1076.2,568.6 1076.3,568.6 1076.4,578.6 1076.6,558.6 1076.7,575.2 1076.8,571.9 1077.0,561.9 1077.1,585.2 1077.2,585.2 1077.4,575.2 1077.5,575.2 1077.6,571.9 1077.8,588.6 1077.9,581.9 1078.0,581.9 1078.2,575.2 1078.3,575.2 1078.4,578.6 1078.6,561.9 1078.7,578.6 1078.8,575.2 1079.0,588.6 1079.1,575.2 1079.2,558.6 1079.3,561.9 1079.5,598.6 1079.6,555.2 1079.7,575.2 1079.9,565.2 1080.0,585.2 1080.1,591.9 1080.3,561.9 1080.4,575.2 1080.5,581.9 1080.7,581.9 1080.8,578.6 1080.9,585.2 1081.1,581.9 1081.2,571.9 1081.3,561.9 1081.5,571.9 1081.6,575.2 1081.7,585.2 1081.9,601.9 1082.0,565.2 1082.1,565.2 1082.3,565.2 1082.4,585.2 1082.5,595.2 1082.7,575.2 1082.8,578.6 1082.9,575.2 1083.1,568.6 1083.2,565.2 1083.3,575.2 1083.5,568.6 1083.6,601.9 1083.7,585.2 1083.9,581.9 1084.0,578.6 1084.1,565.2 1084.2,585.2 1084.4,565.2 1084.5,585.2 1084.6,585.2 1084.8,578.6 1084.9,575.2 1085.0,565.2 1085.2,575.2 1085.3,581.9 1085.4,585.2 1085.6,575.2 1085.7,568.6 1085.8,578.6 1086.0,585.2 1086.1,581.9 1086.2,578.6 1086.4,565.2 1086.5,561.9 1086.6,588.6 1086.8,591.9 1086.9,581.9 1087.0,605.2 1087.2,575.2 1087.3,558.6 1087.4,568.6 1087.6,581.9 1087.7,595.2 1087.8,571.9 1088.0,568.6 1088.1,565.2 1088.2,565.2 1088.4,568.6 1088.5,575.2 1088.6,578.6 1088.8,581.9 1088.9,568.6 1089.0,571.9 1089.2,561.9 1089.3,568.6 1089.4,585.2 1089.5,588.6 1089.7,598.6 1089.8,591.9 1089.9,578.6 1090.1,561.9 1090.2,581.9 1090.3,595.2 1090.5,565.2 1090.6,578.6 1090.7,575.2 1090.9,571.9 1091.0,588.6 1091.1,575.2 1091.3,581.9 1091.4,581.9 1091.5,595.2 1091.7,575.2 1091.8,591.9 1091.9,588.6 1092.1,575.2 1092.2,571.9 1092.3,565.2 1092.5,561.9 1092.6,575.2 1092.7,565.2 1092.9,585.2 1093.0,575.2 1093.1,561.9 1093.3,591.9 1093.4,568.6 1093.5,585.2 1093.7,591.9 1093.8,575.2 1093.9,565.2 1094.1,581.9 1094.2,585.2 1094.3,581.9 1094.5,585.2 1094.6,575.2 1094.7,588.6 1094.8,585.2 1095.0,568.6 1095.1,585.2 1095.2,571.9 1095.4,578.6 1095.5,588.6 1095.6,578.6 1095.8,585.2 1095.9,568.6 1096.0,561.9 1096.2,571.9 1096.3,575.2 1096.4,555.2 1096.6,585.2 1096.7,588.6 1096.8,585.2 1097.0,575.2 1097.1,568.6 1097.2,588.6 1097.4,558.6 1097.5,575.2 1097.6,568.6 1097.8,571.9 1097.9,588.6 1098.0,565.2 1098.2,581.9 1098.3,575.2 1098.4,571.9 1098.6,578.6 1098.7,581.9 1098.8,578.6 1099.0,568.6 1099.1,571.9 1099.2,575.2 1099.4,565.2 1099.5,585.2 1099.6,561.9 1099.8,578.6 1099.9,595.2 1100.0,575.2 1100.2,575.2 1100.3,581.9 1100.4,575.2 1100.5,571.9 1100.7,558.6 1100.8,595.2 1100.9,575.2 1101.1,558.6 1101.2,578.6 1101.3,561.9 1101.5,581.9 1101.6,568.6 1101.7,578.6 1101.9,571.9 1102.0,571.9 1102.1,585.2 1102.3,585.2 1102.4,575.2 1102.5,585.2 1102.7,565.2 1102.8,571.9 1102.9,588.6 1103.1,565.2 1103.2,568.6 1103.3,565.2 1103.5,601.9 1103.6,588.6 1103.7,585.2 1103.9,588.6 1104.0,571.9 1104.1,558.6 1104.3,568.6 1104.4,591.9 1104.5,561.9 1104.7,581.9 1104.8,578.6 1104.9,568.6 1105.1,575.2 1105.2,565.2 1105.3,585.2 1105.5,585.2 1105.6,588.6 1105.7,581.9 1105.8,575.2 1106.0,588.6 1106.1,565.2 1106.2,568.6 1106.4,568.6 1106.5,558.6 1106.6,575.2 1106.8,571.9 1106.9,581.9 1107.0,561.9 1107.2,565.2 1107.3,571.9 1107.4,585.2 1107.6,575.2 1107.7,578.6 1107.8,585.2 1108.0,575.2 1108.1,571.9 1108.2,565.2 1108.4,578.6 1108.5,585.2 1108.6,581.9 1108.8,575.2 1108.9,571.9 1109.0,581.9 1109.2,565.2 1109.3,578.6 1109.4,575.2 1109.6,568.6 1109.7,565.2 1109.8,575.2 1110.0,595.2 1110.1,568.6 1110.2,585.2 1110.4,575.2 1110.5,561.9 1110.6,571.9 1110.8,565.2 1110.9,578.6 1111.0,588.6 1111.1,578.6 1111.3,565.2 1111.4,581.9 1111.5,558.6 1111.7,585.2 1111.8,571.9 1111.9,568.6 1112.1,581.9 1112.2,568.6 1112.3,561.9 1112.5,581.9 1112.6,581.9 1112.7,581.9 1112.9,575.2 1113.0,561.9 1113.1,581.9 1113.3,558.6 1113.4,568.6 1113.5,575.2 1113.7,571.9 1113.8,555.2 1113.9,588.6 1114.1,575.2 1114.2,581.9 1114.3,561.9 1114.5,575.2 1114.6,581.9 1114.7,588.6 1114.9,565.2 1115.0,588.6 1115.1,575.2 1115.3,565.2 1115.4,571.9 1115.5,565.2 1115.7,575.2 1115.8,568.6 1115.9,575.2 1116.0,578.6 1116.2,568.6 1116.3,581.9 1116.4,585.2 1116.6,588.6 1116.7,588.6 1116.8,571.9 1117.0,581.9 1117.1,561.9 1117.2,585.2 1117.4,575.2 1117.5,568.6 1117.6,571.9 1117.8,595.2 1117.9,568.6 1118.0,558.6 1118.2,585.2 1118.3,565.2 1118.4,575.2 1118.6,585.2 1118.7,555.2 1118.8,561.9 1119.0,568.6 1119.1,605.2 1119.2,571.9 1119.4,578.6 1119.5,581.9 1119.6,565.2 1119.8,585.2 1119.9,588.6 1120.0,571.9 1120.2,571.9 1120.3,568.6 1120.4,581.9 1120.6,571.9 1120.7,568.6 1120.8,555.2 1121.0,548.6 1121.1,568.6 1121.2,581.9 1121.3,578.6 1121.5,581.9 1121.6,578.6 1121.7,585.2 1121.9,571.9 1122.0,585.2 1122.1,568.6 1122.3,578.6 1122.4,578.6 1122.5,558.6 1122.7,571.9 1122.8,591.9 1122.9,565.2 1123.1,575.2 1123.2,568.6 1123.3,575.2 1123.5,575.2 1123.6,568.6 1123.7,571.9 1123.9,588.6 1124.0,568.6 1124.1,581.9 1124.3,585.2 1124.4,575.2 1124.5,581.9 1124.7,565.2 1124.8,568.6 1124.9,558.6 1125.1,588.6 1125.2,568.6 1125.3,581.9 1125.5,561.9 1125.6,595.2 1125.7,578.6 1125.9,578.6 1126.0,571.9 1126.1,585.2 1126.3,568.6 1126.4,588.6 1126.5,575.2 1126.7,565.2 1126.8,575.2 1126.9,571.9 1127.0,568.6 1127.2,581.9 1127.3,578.6 1127.4,575.2 1127.6,578.6 1127.7,581.9 1127.8,555.2 1128.0,605.2 1128.1,581.9 1128.2,585.2 1128.4,578.6 1128.5,565.2 1128.6,571.9 1128.8,558.6 1128.9,588.6 1129.0,551.9 1129.2,565.2 1129.3,565.2 1129.4,578.6 1129.6,588.6 1129.7,568.6 1129.8,588.6 1130.0,551.9 1130.1,585.2 1130.2,575.2 1130.4,578.6 1130.5,588.6 1130.6,585.2 1130.8,578.6 1130.9,581.9 1131.0,575.2 1131.2,575.2 1131.3,568.6 1131.4,571.9 1131.6,578.6 1131.7,575.2 1131.8,571.9 1132.0,581.9 1132.1,568.6 1132.2,571.9 1132.3,571.9 1132.5,581.9 1132.6,581.9 1132.7,571.9 1132.9,591.9 1133.0,581.9 1133.1,578.6 1133.3,588.6 1133.4,571.9 1133.5,551.9 1133.7,561.9 1133.8,591.9 1133.9,575.2 1134.1,581.9 1134.2,555.2 1134.3,571.9 1134.5,568.6 1134.6,595.2 1134.7,575.2 1134.9,585.2 1135.0,578.6 1135.1,575.2 1135.3,571.9 1135.4,578.6 1135.5,565.2 1135.7,578.6 1135.8,581.9 1135.9,575.2 1136.1,565.2 1136.2,555.2 1136.3,588.6 1136.5,585.2 1136.6,591.9 1136.7,585.2 1136.9,561.9 1137.0,568.6 1137.1,568.6 1137.2,568.6 1137.4,581.9 1137.5,578.6 1137.6,578.6 1137.8,575.2 1137.9,588.6 1138.0,575.2 1138.2,578.6 1138.3,575.2 1138.4,561.9 1138.6,558.6 1138.7,578.6 1138.8,588.6 1139.0,555.2 1139.1,585.2 1139.2,561.9 1139.4,588.6 1139.5,578.6 1139.6,581.9 1139.8,581.9 1139.9,575.2 1140.0,575.2 1140.2,568.6 1140.3,575.2 1140.4,558.6 1140.6,571.9 1140.7,575.2 1140.8,565.2 1141.0,558.6 1141.1,585.2 1141.2,561.9 1141.4,561.9 1141.5,575.2 1141.6,575.2 1141.8,578.6 1141.9,568.6 1142.0,575.2 1142.2,575.2 1142.3,561.9 1142.4,561.9 1142.5,545.2 1142.7,578.6 1142.8,571.9 1142.9,588.6 1143.1,548.6 1143.2,575.2 1143.3,578.6 1143.5,571.9 1143.6,578.6 1143.7,575.2 1143.9,575.2 1144.0,568.6 1144.1,578.6 1144.3,591.9 1144.4,561.9 1144.5,565.2 1144.7,578.6 1144.8,571.9 1144.9,571.9 1145.1,571.9 1145.2,568.6 1145.3,588.6 1145.5,581.9 1145.6,571.9 1145.7,565.2 1145.9,571.9 1146.0,585.2 1146.1,581.9 1146.3,571.9 1146.4,565.2 1146.5,575.2 1146.7,578.6 1146.8,585.2 1146.9,588.6 1147.1,581.9 1147.2,571.9 1147.3,585.2 1147.5,578.6 1147.6,555.2 1147.7,565.2 1147.8,561.9 1148.0,575.2 1148.1,568.6 1148.2,575.2 1148.4,578.6 1148.5,568.6 1148.6,575.2 1148.8,581.9 1148.9,571.9 1149.0,558.6 1149.2,591.9 1149.3,578.6 1149.4,571.9 1149.6,561.9 1149.7,578.6 1149.8,585.2 1150.0,585.2 1150.1,578.6 1150.2,581.9 1150.4,591.9 1150.5,581.9 1150.6,558.6 1150.8,578.6 1150.9,578.6 1151.0,585.2 1151.2,578.6 1151.3,575.2 1151.4,585.2 1151.6,575.2 1151.7,565.2 1151.8,578.6 1152.0,585.2 1152.1,578.6 1152.2,558.6 1152.4,575.2 1152.5,565.2 1152.6,565.2 1152.8,575.2 1152.9,571.9 1153.0,578.6 1153.2,578.6 1153.3,575.2 1153.4,578.6 1153.5,575.2 1153.7,551.9 1153.8,568.6 1153.9,561.9 1154.1,581.9 1154.2,581.9 1154.3,555.2 1154.5,578.6 1154.6,575.2 1154.7,595.2 1154.9,561.9 1155.0,568.6 1155.1,568.6 1155.3,588.6 1155.4,585.2 1155.5,578.6 1155.7,565.2 1155.8,591.9 1155.9,591.9 1156.1,568.6 1156.2,568.6 1156.3,575.2 1156.5,575.2 1156.6,585.2 1156.7,585.2 1156.9,585.2 1157.0,581.9 1157.1,565.2 1157.3,575.2 1157.4,571.9 1157.5,551.9 1157.7,581.9 1157.8,575.2 1157.9,565.2 1158.1,571.9 1158.2,581.9 1158.3,585.2 1158.5,578.6 1158.6,581.9 1158.7,588.6 1158.8,581.9 1159.0,581.9 1159.1,565.2 1159.2,585.2 1159.4,575.2 1159.5,568.6 1159.6,581.9 1159.8,585.2 1159.9,571.9 1160.0,578.6 1160.2,575.2 1160.3,588.6 1160.4,548.6 1160.6,585.2 1160.7,568.6 1160.8,551.9 1161.0,581.9 1161.1,545.2 1161.2,581.9 1161.4,575.2 1161.5,575.2 1161.6,581.9 1161.8,581.9 1161.9,585.2 1162.0,565.2 1162.2,581.9 1162.3,578.6 1162.4,578.6 1162.6,571.9 1162.7,585.2 1162.8,565.2 1163.0,585.2 1163.1,571.9 1163.2,565.2 1163.4,581.9 1163.5,581.9 1163.6,568.6 1163.8,571.9 1163.9,585.2 1164.0,585.2 1164.1,561.9 1164.3,565.2 1164.4,575.2 1164.5,568.6 1164.7,578.6 1164.8,598.6 1164.9,581.9 1165.1,585.2 1165.2,568.6 1165.3,585.2 1165.5,578.6 1165.6,555.2 1165.7,581.9 1165.9,571.9 1166.0,571.9 1166.1,561.9 1166.3,558.6 1166.4,561.9 1166.5,575.2 1166.7,555.2 1166.8,591.9 1166.9,595.2 1167.1,568.6 1167.2,571.9 1167.3,578.6 1167.5,571.9 1167.6,565.2 1167.7,548.6 1167.9,571.9 1168.0,571.9 1168.1,571.9 1168.3,578.6 1168.4,578.6 1168.5,585.2 1168.7,571.9 1168.8,578.6 1168.9,598.6 1169.0,561.9 1169.2,575.2 1169.3,571.9 1169.4,568.6 1169.6,581.9 1169.7,578.6 1169.8,548.6 1170.0,581.9 1170.1,578.6 1170.2,561.9 1170.4,581.9 1170.5,585.2 1170.6,585.2 1170.8,585.2 1170.9,585.2 1171.0,598.6 1171.2,595.2 1171.3,571.9 1171.4,568.6 1171.6,568.6 1171.7,575.2 1171.8,575.2 1172.0,565.2 1172.1,571.9 1172.2,568.6 1172.4,561.9 1172.5,575.2 1172.6,558.6 1172.8,575.2 1172.9,565.2 1173.0,571.9 1173.2,558.6 1173.3,571.9 1173.4,585.2 1173.6,571.9 1173.7,581.9 1173.8,565.2 1174.0,545.2 1174.1,565.2 1174.2,575.2 1174.3,578.6 1174.5,565.2 1174.6,588.6 1174.7,571.9 1174.9,585.2 1175.0,588.6 1175.1,561.9 1175.3,588.6 1175.4,581.9 1175.5,578.6 1175.7,581.9 1175.8,565.2 1175.9,551.9 1176.1,595.2 1176.2,561.9 1176.3,578.6 1176.5,571.9 1176.6,578.6 1176.7,578.6 1176.9,578.6 1177.0,568.6 1177.1,585.2 1177.3,558.6 1177.4,568.6 1177.5,585.2 1177.7,598.6 1177.8,581.9 1177.9,585.2 1178.1,588.6 1178.2,568.6 1178.3,588.6 1178.5,581.9 1178.6,581.9 1178.7,568.6 1178.9,561.9 1179.0,575.2 1179.1,578.6 1179.3,581.9 1179.4,575.2 1179.5,581.9 1179.7,571.9 1179.8,591.9 1179.9,565.2 1180.0,565.2 1180.2,581.9 1180.3,598.6 1180.4,568.6 1180.6,585.2 1180.7,578.6 1180.8,581.9 1181.0,575.2 1181.1,561.9 1181.2,578.6 1181.4,568.6 1181.5,575.2 1181.6,588.6 1181.8,571.9 1181.9,568.6 1182.0,578.6 1182.2,578.6 1182.3,568.6 1182.4,571.9 1182.6,581.9 1182.7,565.2 1182.8,561.9 1183.0,568.6 1183.1,581.9 1183.2,558.6" fill="none" stroke="#0000ff" stroke-width="1.8" stroke-linejoin="round"/></svg>
<rect x="911.0" y="516.9" width="274.0" height="120.00" fill="none" stroke="#000" stroke-width="1.5"/>
<line x1="912.00" y1="636.90" x2="912.00" y2="643.40" stroke="#000" stroke-width="1.5"/>
<text x="908.86" y="659.80" font-size="10.40" textLength="6.30" lengthAdjust="spacingAndGlyphs" fill="#000">0</text>
<line x1="978.25" y1="636.90" x2="978.25" y2="643.40" stroke="#000" stroke-width="1.5"/>
<text x="968.75" y="659.80" font-size="10.40" textLength="18.90" lengthAdjust="spacingAndGlyphs" fill="#000">500</text>
<line x1="1044.50" y1="636.90" x2="1044.50" y2="643.40" stroke="#000" stroke-width="1.5"/>
<text x="1031.68" y="659.80" font-size="10.40" textLength="25.20" lengthAdjust="spacingAndGlyphs" fill="#000">1000</text>
<line x1="1110.75" y1="636.90" x2="1110.75" y2="643.40" stroke="#000" stroke-width="1.5"/>
<text x="1097.93" y="659.80" font-size="10.40" textLength="25.20" lengthAdjust="spacingAndGlyphs" fill="#000">1500</text>
<line x1="1177.00" y1="636.90" x2="1177.00" y2="643.40" stroke="#000" stroke-width="1.5"/>
<text x="1164.35" y="659.80" font-size="10.40" textLength="25.20" lengthAdjust="spacingAndGlyphs" fill="#000">2000</text>
<line x1="904.50" y1="631.90" x2="911.00" y2="631.90" stroke="#000" stroke-width="1.5"/>
<text x="876.73" y="635.55" font-size="10.40" textLength="18.90" lengthAdjust="spacingAndGlyphs" fill="#000">190</text>
<line x1="904.50" y1="598.57" x2="911.00" y2="598.57" stroke="#000" stroke-width="1.5"/>
<text x="876.73" y="602.22" font-size="10.40" textLength="18.90" lengthAdjust="spacingAndGlyphs" fill="#000">200</text>
<line x1="904.50" y1="565.24" x2="911.00" y2="565.24" stroke="#000" stroke-width="1.5"/>
<text x="876.73" y="568.89" font-size="10.40" textLength="18.90" lengthAdjust="spacingAndGlyphs" fill="#000">210</text>
<line x1="904.50" y1="531.91" x2="911.00" y2="531.91" stroke="#000" stroke-width="1.5"/>
<text x="876.73" y="535.56" font-size="10.40" textLength="18.90" lengthAdjust="spacingAndGlyphs" fill="#000">220</text>
<text x="1043.74" y="677.90" font-size="10.92" textLength="7.12" lengthAdjust="spacingAndGlyphs" fill="#000">X</text>
<text transform="translate(866.10,577.50) rotate(-90)" x="-17.42" y="0" font-size="10.92" textLength="34.76" lengthAdjust="spacingAndGlyphs" fill="#000">counts</text>
<text transform="translate(1194.30,575.50) rotate(90)" x="-19.45" y="0" font-size="10.92" textLength="38.64" lengthAdjust="spacingAndGlyphs" fill="#000">cut in x</text>
<rect x="1115.7" y="519.8" width="66.3" height="16.6" rx="2" fill="#fff" fill-opacity="0.8" stroke="#d6d6d6" stroke-width="1"/>
<line x1="1118.10" y1="527.80" x2="1139.80" y2="527.80" stroke="#0000ff" stroke-width="1.4"/>
<text x="1143.99" y="530.70" font-size="10.71" textLength="34.05" lengthAdjust="spacingAndGlyphs" fill="#000">y=517</text>
<svg x="911.0" y="688.8" width="274.0" height="120.30" viewBox="911.0 688.8 274.0 120.30" overflow="hidden"><polyline points="913.3,747.3 913.6,707.2 913.8,723.9 914.1,727.2 914.3,733.9 914.6,710.6 914.9,703.9 915.1,720.6 915.4,730.6 915.6,733.9 915.9,737.3 916.2,733.9 916.4,740.6 916.7,737.3 916.9,743.9 917.2,740.6 917.5,757.3 917.7,737.3 918.0,753.9 918.2,760.6 918.5,747.3 918.7,747.3 919.0,750.6 919.3,730.6 919.5,757.3 919.8,747.3 920.0,760.6 920.3,747.3 920.6,747.3 920.8,753.9 921.1,780.6 921.3,757.3 921.6,760.6 921.9,747.3 922.1,757.3 922.4,760.6 922.6,753.9 922.9,750.6 923.2,767.3 923.4,733.9 923.7,760.6 923.9,753.9 924.2,757.3 924.5,733.9 924.7,740.6 925.0,760.6 925.2,740.6 925.5,750.6 925.8,757.3 926.0,733.9 926.3,743.9 926.5,760.6 926.8,727.2 927.1,747.3 927.3,747.3 927.6,753.9 927.8,753.9 928.1,777.3 928.4,743.9 928.6,747.3 928.9,743.9 929.1,753.9 929.4,743.9 929.6,760.6 929.9,713.9 930.2,743.9 930.4,753.9 930.7,747.3 930.9,760.6 931.2,747.3 931.5,737.3 931.7,743.9 932.0,743.9 932.2,743.9 932.5,760.6 932.8,757.3 933.0,743.9 933.3,764.0 933.5,757.3 933.8,770.6 934.1,760.6 934.3,747.3 934.6,740.6 934.8,727.2 935.1,740.6 935.4,743.9 935.6,740.6 935.9,740.6 936.1,747.3 936.4,750.6 936.7,747.3 936.9,743.9 937.2,767.3 937.4,740.6 937.7,750.6 938.0,750.6 938.2,753.9 938.5,764.0 938.7,740.6 939.0,747.3 939.2,757.3 939.5,753.9 939.8,750.6 940.0,760.6 940.3,750.6 940.5,753.9 940.8,743.9 941.1,743.9 941.3,743.9 941.6,750.6 941.8,750.6 942.1,757.3 942.4,757.3 942.6,764.0 942.9,737.3 943.1,753.9 943.4,753.9 943.7,753.9 943.9,733.9 944.2,747.3 944.4,740.6 944.7,760.6 945.0,760.6 945.2,764.0 945.5,727.2 945.7,747.3 946.0,753.9 946.3,750.6 946.5,747.3 946.8,740.6 947.0,747.3 947.3,743.9 947.6,770.6 947.8,760.6 948.1,730.6 948.3,740.6 948.6,753.9 948.9,753.9 949.1,760.6 949.4,764.0 949.6,753.9 949.9,764.0 950.1,743.9 950.4,747.3 950.7,753.9 950.9,740.6 951.2,760.6 951.4,764.0 951.7,760.6 952.0,737.3 952.2,760.6 952.5,767.3 952.7,747.3 953.0,747.3 953.3,757.3 953.5,753.9 953.8,753.9 954.0,740.6 954.3,747.3 954.6,737.3 954.8,730.6 955.1,760.6 955.3,753.9 955.6,747.3 955.9,737.3 956.1,760.6 956.4,760.6 956.6,780.6 956.9,747.3 957.2,743.9 957.4,774.0 957.7,774.0 957.9,743.9 958.2,750.6 958.5,757.3 958.7,750.6 959.0,753.9 959.2,743.9 959.5,737.3 959.8,780.6 960.0,743.9 960.3,743.9 960.5,757.3 960.8,747.3 961.0,753.9 961.3,757.3 961.6,750.6 961.8,743.9 962.1,737.3 962.3,737.3 962.6,764.0 962.9,747.3 963.1,750.6 963.4,743.9 963.6,740.6 963.9,764.0 964.2,747.3 964.4,760.6 964.7,753.9 964.9,767.3 965.2,733.9 965.5,750.6 965.7,747.3 966.0,753.9 966.2,757.3 966.5,760.6 966.8,757.3 967.0,753.9 967.3,740.6 967.5,764.0 967.8,737.3 968.1,770.6 968.3,727.2 968.6,740.6 968.8,743.9 969.1,743.9 969.4,743.9 969.6,737.3 969.9,760.6 970.1,743.9 970.4,767.3 970.6,753.9 970.9,743.9 971.2,750.6 971.4,750.6 971.7,767.3 971.9,743.9 972.2,760.6 972.5,750.6 972.7,730.6 973.0,750.6 973.2,747.3 973.5,753.9 973.8,747.3 974.0,764.0 974.3,764.0 974.5,760.6 974.8,747.3 975.1,760.6 975.3,760.6 975.6,747.3 975.8,757.3 976.1,747.3 976.4,760.6 976.6,764.0 976.9,750.6 977.1,757.3 977.4,760.6 977.7,767.3 977.9,733.9 978.2,750.6 978.4,747.3 978.7,737.3 979.0,733.9 979.2,747.3 979.5,727.2 979.7,750.6 980.0,753.9 980.3,760.6 980.5,753.9 980.8,750.6 981.0,757.3 981.3,733.9 981.5,764.0 981.8,737.3 982.1,750.6 982.3,753.9 982.6,760.6 982.8,764.0 983.1,764.0 983.4,767.3 983.6,757.3 983.9,740.6 984.1,764.0 984.4,770.6 984.7,750.6 984.9,757.3 985.2,753.9 985.4,767.3 985.7,753.9 986.0,753.9 986.2,727.2 986.5,733.9 986.7,753.9 987.0,737.3 987.3,750.6 987.5,760.6 987.8,730.6 988.0,753.9 988.3,750.6 988.6,747.3 988.8,760.6 989.1,750.6 989.3,757.3 989.6,757.3 989.9,753.9 990.1,737.3 990.4,747.3 990.6,753.9 990.9,757.3 991.1,753.9 991.4,757.3 991.7,737.3 991.9,750.6 992.2,747.3 992.4,760.6 992.7,733.9 993.0,747.3 993.2,720.6 993.5,760.6 993.7,753.9 994.0,743.9 994.3,750.6 994.5,740.6 994.8,747.3 995.0,737.3 995.3,740.6 995.6,767.3 995.8,730.6 996.1,757.3 996.3,750.6 996.6,747.3 996.9,737.3 997.1,753.9 997.4,767.3 997.6,760.6 997.9,740.6 998.2,757.3 998.4,743.9 998.7,743.9 998.9,730.6 999.2,707.2 999.5,753.9 999.7,737.3 1000.0,750.6 1000.2,757.3 1000.5,753.9 1000.8,757.3 1001.0,713.9 1001.3,770.6 1001.5,737.3 1001.8,743.9 1002.0,747.3 1002.3,757.3 1002.6,753.9 1002.8,730.6 1003.1,737.3 1003.3,760.6 1003.6,750.6 1003.9,730.6 1004.1,767.3 1004.4,747.3 1004.6,740.6 1004.9,753.9 1005.2,750.6 1005.4,733.9 1005.7,743.9 1005.9,737.3 1006.2,743.9 1006.5,757.3 1006.7,757.3 1007.0,743.9 1007.2,753.9 1007.5,764.0 1007.8,764.0 1008.0,740.6 1008.3,740.6 1008.5,737.3 1008.8,770.6 1009.1,743.9 1009.3,757.3 1009.6,737.3 1009.8,743.9 1010.1,767.3 1010.4,737.3 1010.6,753.9 1010.9,730.6 1011.1,753.9 1011.4,740.6 1011.7,747.3 1011.9,747.3 1012.2,753.9 1012.4,720.6 1012.7,737.3 1012.9,717.2 1013.2,760.6 1013.5,743.9 1013.7,747.3 1014.0,753.9 1014.2,743.9 1014.5,730.6 1014.8,740.6 1015.0,743.9 1015.3,750.6 1015.5,747.3 1015.8,774.0 1016.1,753.9 1016.3,743.9 1016.6,743.9 1016.8,760.6 1017.1,750.6 1017.4,727.2 1017.6,757.3 1017.9,757.3 1018.1,747.3 1018.4,750.6 1018.7,747.3 1018.9,764.0 1019.2,743.9 1019.4,750.6 1019.7,760.6 1020.0,747.3 1020.2,747.3 1020.5,753.9 1020.7,757.3 1021.0,737.3 1021.3,743.9 1021.5,753.9 1021.8,740.6 1022.0,750.6 1022.3,747.3 1022.5,757.3 1022.8,753.9 1023.1,750.6 1023.3,737.3 1023.6,757.3 1023.8,747.3 1024.1,753.9 1024.4,740.6 1024.6,757.3 1024.9,747.3 1025.1,753.9 1025.4,743.9 1025.7,737.3 1025.9,727.2 1026.2,743.9 1026.4,774.0 1026.7,740.6 1027.0,740.6 1027.2,737.3 1027.5,740.6 1027.7,757.3 1028.0,733.9 1028.3,753.9 1028.5,740.6 1028.8,760.6 1029.0,760.6 1029.3,753.9 1029.6,760.6 1029.8,753.9 1030.1,757.3 1030.3,737.3 1030.6,740.6 1030.9,737.3 1031.1,747.3 1031.4,757.3 1031.6,764.0 1031.9,760.6 1032.2,753.9 1032.4,753.9 1032.7,753.9 1032.9,737.3 1033.2,740.6 1033.4,747.3 1033.7,750.6 1034.0,753.9 1034.2,747.3 1034.5,753.9 1034.7,740.6 1035.0,733.9 1035.3,747.3 1035.5,764.0 1035.8,743.9 1036.0,753.9 1036.3,733.9 1036.6,764.0 1036.8,743.9 1037.1,740.6 1037.3,764.0 1037.6,737.3 1037.9,757.3 1038.1,740.6 1038.4,737.3 1038.6,747.3 1038.9,743.9 1039.2,733.9 1039.4,757.3 1039.7,747.3 1039.9,750.6 1040.2,767.3 1040.5,760.6 1040.7,753.9 1041.0,737.3 1041.2,737.3 1041.5,753.9 1041.8,740.6 1042.0,747.3 1042.3,737.3 1042.5,740.6 1042.8,753.9 1043.0,737.3 1043.3,743.9 1043.6,760.6 1043.8,760.6 1044.1,764.0 1044.3,740.6 1044.6,747.3 1044.9,760.6 1045.1,743.9 1045.4,743.9 1045.6,737.3 1045.9,743.9 1046.2,710.6 1046.4,747.3 1046.7,750.6 1046.9,737.3 1047.2,753.9 1047.5,753.9 1047.7,740.6 1048.0,737.3 1048.2,743.9 1048.5,757.3 1048.8,747.3 1049.0,760.6 1049.3,737.3 1049.5,727.2 1049.8,770.6 1050.1,750.6 1050.3,737.3 1050.6,737.3 1050.8,750.6 1051.1,753.9 1051.4,747.3 1051.6,750.6 1051.9,770.6 1052.1,747.3 1052.4,750.6 1052.7,750.6 1052.9,757.3 1053.2,747.3 1053.4,753.9 1053.7,720.6 1053.9,743.9 1054.2,740.6 1054.5,740.6 1054.7,757.3 1055.0,737.3 1055.2,740.6 1055.5,747.3 1055.8,737.3 1056.0,750.6 1056.3,753.9 1056.5,753.9 1056.8,740.6 1057.1,743.9 1057.3,747.3 1057.6,737.3 1057.8,760.6 1058.1,767.3 1058.4,747.3 1058.6,743.9 1058.9,737.3 1059.1,750.6 1059.4,743.9 1059.7,750.6 1059.9,757.3 1060.2,737.3 1060.4,730.6 1060.7,760.6 1061.0,743.9 1061.2,743.9 1061.5,743.9 1061.7,750.6 1062.0,753.9 1062.3,750.6 1062.5,753.9 1062.8,747.3 1063.0,760.6 1063.3,747.3 1063.6,747.3 1063.8,737.3 1064.1,747.3 1064.3,753.9 1064.6,743.9 1064.8,764.0 1065.1,753.9 1065.4,747.3 1065.6,743.9 1065.9,757.3 1066.1,740.6 1066.4,753.9 1066.7,723.9 1066.9,730.6 1067.2,750.6 1067.4,767.3 1067.7,743.9 1068.0,737.3 1068.2,747.3 1068.5,737.3 1068.7,750.6 1069.0,747.3 1069.3,750.6 1069.5,760.6 1069.8,757.3 1070.0,737.3 1070.3,747.3 1070.6,743.9 1070.8,743.9 1071.1,757.3 1071.3,764.0 1071.6,757.3 1071.9,767.3 1072.1,757.3 1072.4,747.3 1072.6,750.6 1072.9,757.3 1073.2,740.6 1073.4,753.9 1073.7,733.9 1073.9,757.3 1074.2,757.3 1074.4,757.3 1074.7,757.3 1075.0,760.6 1075.2,727.2 1075.5,760.6 1075.7,733.9 1076.0,753.9 1076.3,760.6 1076.5,750.6 1076.8,747.3 1077.0,743.9 1077.3,727.2 1077.6,747.3 1077.8,743.9 1078.1,743.9 1078.3,757.3 1078.6,750.6 1078.9,740.6 1079.1,757.3 1079.4,757.3 1079.6,743.9 1079.9,747.3 1080.2,757.3 1080.4,753.9 1080.7,757.3 1080.9,757.3 1081.2,743.9 1081.5,764.0 1081.7,753.9 1082.0,737.3 1082.2,737.3 1082.5,757.3 1082.8,753.9 1083.0,753.9 1083.3,750.6 1083.5,757.3 1083.8,750.6 1084.1,757.3 1084.3,747.3 1084.6,750.6 1084.8,753.9 1085.1,760.6 1085.3,764.0 1085.6,740.6 1085.9,753.9 1086.1,760.6 1086.4,750.6 1086.6,747.3 1086.9,727.2 1087.2,753.9 1087.4,727.2 1087.7,750.6 1087.9,760.6 1088.2,730.6 1088.5,764.0 1088.7,764.0 1089.0,757.3 1089.2,730.6 1089.5,760.6 1089.8,757.3 1090.0,750.6 1090.3,733.9 1090.5,730.6 1090.8,740.6 1091.1,750.6 1091.3,740.6 1091.6,733.9 1091.8,743.9 1092.1,740.6 1092.4,753.9 1092.6,764.0 1092.9,750.6 1093.1,737.3 1093.4,757.3 1093.7,760.6 1093.9,750.6 1094.2,753.9 1094.4,774.0 1094.7,740.6 1095.0,740.6 1095.2,727.2 1095.5,767.3 1095.7,760.6 1096.0,750.6 1096.2,740.6 1096.5,753.9 1096.8,760.6 1097.0,760.6 1097.3,750.6 1097.5,750.6 1097.8,733.9 1098.1,750.6 1098.3,750.6 1098.6,730.6 1098.8,747.3 1099.1,764.0 1099.4,767.3 1099.6,750.6 1099.9,757.3 1100.1,743.9 1100.4,747.3 1100.7,753.9 1100.9,767.3 1101.2,753.9 1101.4,743.9 1101.7,747.3 1102.0,760.6 1102.2,764.0 1102.5,743.9 1102.7,723.9 1103.0,733.9 1103.3,740.6 1103.5,767.3 1103.8,740.6 1104.0,753.9 1104.3,733.9 1104.6,753.9 1104.8,750.6 1105.1,743.9 1105.3,764.0 1105.6,750.6 1105.8,757.3 1106.1,743.9 1106.4,753.9 1106.6,750.6 1106.9,737.3 1107.1,747.3 1107.4,737.3 1107.7,740.6 1107.9,753.9 1108.2,740.6 1108.4,733.9 1108.7,740.6 1109.0,740.6 1109.2,757.3 1109.5,747.3 1109.7,764.0 1110.0,747.3 1110.3,760.6 1110.5,737.3 1110.8,750.6 1111.0,750.6 1111.3,740.6 1111.6,747.3 1111.8,753.9 1112.1,743.9 1112.3,747.3 1112.6,750.6 1112.9,737.3 1113.1,743.9 1113.4,747.3 1113.6,723.9 1113.9,743.9 1114.2,743.9 1114.4,750.6 1114.7,750.6 1114.9,750.6 1115.2,753.9 1115.5,733.9 1115.7,760.6 1116.0,730.6 1116.2,743.9 1116.5,757.3 1116.7,760.6 1117.0,753.9 1117.3,750.6 1117.5,730.6 1117.8,747.3 1118.0,747.3 1118.3,730.6 1118.6,743.9 1118.8,740.6 1119.1,753.9 1119.3,747.3 1119.6,757.3 1119.9,757.3 1120.1,743.9 1120.4,757.3 1120.6,747.3 1120.9,750.6 1121.2,757.3 1121.4,774.0 1121.7,753.9 1121.9,750.6 1122.2,750.6 1122.5,743.9 1122.7,727.2 1123.0,737.3 1123.2,750.6 1123.5,740.6 1123.8,757.3 1124.0,737.3 1124.3,757.3 1124.5,753.9 1124.8,740.6 1125.1,727.2 1125.3,777.3 1125.6,730.6 1125.8,764.0 1126.1,740.6 1126.3,750.6 1126.6,757.3 1126.9,747.3 1127.1,740.6 1127.4,750.6 1127.6,753.9 1127.9,760.6 1128.2,740.6 1128.4,740.6 1128.7,750.6 1128.9,747.3 1129.2,747.3 1129.5,760.6 1129.7,753.9 1130.0,743.9 1130.2,750.6 1130.5,760.6 1130.8,770.6 1131.0,747.3 1131.3,750.6 1131.5,753.9 1131.8,764.0 1132.1,743.9 1132.3,740.6 1132.6,767.3 1132.8,757.3 1133.1,757.3 1133.4,750.6 1133.6,747.3 1133.9,743.9 1134.1,740.6 1134.4,747.3 1134.7,743.9 1134.9,747.3 1135.2,737.3 1135.4,747.3 1135.7,747.3 1136.0,753.9 1136.2,733.9 1136.5,730.6 1136.7,743.9 1137.0,743.9 1137.2,750.6 1137.5,757.3 1137.8,753.9 1138.0,747.3 1138.3,730.6 1138.5,757.3 1138.8,753.9 1139.1,730.6 1139.3,750.6 1139.6,740.6 1139.8,740.6 1140.1,750.6 1140.4,760.6 1140.6,764.0 1140.9,740.6 1141.1,733.9 1141.4,753.9 1141.7,743.9 1141.9,747.3 1142.2,743.9 1142.4,750.6 1142.7,740.6 1143.0,720.6 1143.2,747.3 1143.5,740.6 1143.7,753.9 1144.0,747.3 1144.3,733.9 1144.5,753.9 1144.8,760.6 1145.0,753.9 1145.3,753.9 1145.6,740.6 1145.8,757.3 1146.1,753.9 1146.3,740.6 1146.6,750.6 1146.8,717.2 1147.1,767.3 1147.4,760.6 1147.6,757.3 1147.9,737.3 1148.1,747.3 1148.4,737.3 1148.7,753.9 1148.9,737.3 1149.2,764.0 1149.4,747.3 1149.7,733.9 1150.0,753.9 1150.2,757.3 1150.5,753.9 1150.7,727.2 1151.0,727.2 1151.3,743.9 1151.5,727.2 1151.8,753.9 1152.0,743.9 1152.3,747.3 1152.6,757.3 1152.8,757.3 1153.1,743.9 1153.3,750.6 1153.6,750.6 1153.9,750.6 1154.1,757.3 1154.4,730.6 1154.6,747.3 1154.9,760.6 1155.2,747.3 1155.4,753.9 1155.7,750.6 1155.9,740.6 1156.2,727.2 1156.5,747.3 1156.7,757.3 1157.0,740.6 1157.2,767.3 1157.5,743.9 1157.7,750.6 1158.0,753.9 1158.3,764.0 1158.5,753.9 1158.8,760.6 1159.0,740.6 1159.3,753.9 1159.6,733.9 1159.8,740.6 1160.1,740.6 1160.3,720.6 1160.6,723.9 1160.9,743.9 1161.1,747.3 1161.4,747.3 1161.6,743.9 1161.9,750.6 1162.2,753.9 1162.4,750.6 1162.7,737.3 1162.9,757.3 1163.2,764.0 1163.5,727.2 1163.7,740.6 1164.0,743.9 1164.2,753.9 1164.5,753.9 1164.8,750.6 1165.0,770.6 1165.3,743.9 1165.5,753.9 1165.8,737.3 1166.1,727.2 1166.3,747.3 1166.6,753.9 1166.8,743.9 1167.1,757.3 1167.4,740.6 1167.6,740.6 1167.9,737.3 1168.1,764.0 1168.4,747.3 1168.6,737.3 1168.9,747.3 1169.2,747.3 1169.4,750.6 1169.7,737.3 1169.9,740.6 1170.2,747.3 1170.5,757.3 1170.7,743.9 1171.0,753.9 1171.2,757.3 1171.5,760.6 1171.8,733.9 1172.0,747.3 1172.3,750.6 1172.5,737.3 1172.8,737.3 1173.1,743.9 1173.3,767.3 1173.6,743.9 1173.8,727.2 1174.1,753.9 1174.4,760.6 1174.6,733.9 1174.9,750.6 1175.1,747.3 1175.4,760.6 1175.7,740.6 1175.9,750.6 1176.2,750.6 1176.4,753.9 1176.7,733.9 1177.0,737.3 1177.2,753.9 1177.5,750.6 1177.7,740.6 1178.0,737.3 1178.2,760.6 1178.5,780.6 1178.8,747.3 1179.0,737.3 1179.3,720.6 1179.5,753.9 1179.8,750.6 1180.1,747.3 1180.3,733.9 1180.6,747.3 1180.8,753.9 1181.1,757.3 1181.4,757.3" fill="none" stroke="#0000ff" stroke-width="1.8" stroke-linejoin="round"/></svg>
<rect x="911.0" y="688.8" width="274.0" height="120.30" fill="none" stroke="#000" stroke-width="1.5"/>
<line x1="913.30" y1="809.10" x2="913.30" y2="815.60" stroke="#000" stroke-width="1.5"/>
<text x="910.16" y="831.90" font-size="10.40" textLength="6.30" lengthAdjust="spacingAndGlyphs" fill="#000">0</text>
<line x1="965.20" y1="809.10" x2="965.20" y2="815.60" stroke="#000" stroke-width="1.5"/>
<text x="955.70" y="831.90" font-size="10.40" textLength="18.90" lengthAdjust="spacingAndGlyphs" fill="#000">200</text>
<line x1="1017.10" y1="809.10" x2="1017.10" y2="815.60" stroke="#000" stroke-width="1.5"/>
<text x="1007.72" y="831.90" font-size="10.40" textLength="18.90" lengthAdjust="spacingAndGlyphs" fill="#000">400</text>
<line x1="1069.00" y1="809.10" x2="1069.00" y2="815.60" stroke="#000" stroke-width="1.5"/>
<text x="1059.52" y="831.90" font-size="10.40" textLength="18.90" lengthAdjust="spacingAndGlyphs" fill="#000">600</text>
<line x1="1120.90" y1="809.10" x2="1120.90" y2="815.60" stroke="#000" stroke-width="1.5"/>
<text x="1111.45" y="831.90" font-size="10.40" textLength="18.90" lengthAdjust="spacingAndGlyphs" fill="#000">800</text>
<line x1="1172.80" y1="809.10" x2="1172.80" y2="815.60" stroke="#000" stroke-width="1.5"/>
<text x="1159.98" y="831.90" font-size="10.40" textLength="25.20" lengthAdjust="spacingAndGlyphs" fill="#000">1000</text>
<line x1="904.50" y1="804.00" x2="911.00" y2="804.00" stroke="#000" stroke-width="1.5"/>
<text x="876.73" y="807.65" font-size="10.40" textLength="18.90" lengthAdjust="spacingAndGlyphs" fill="#000">190</text>
<line x1="904.50" y1="770.63" x2="911.00" y2="770.63" stroke="#000" stroke-width="1.5"/>
<text x="876.73" y="774.28" font-size="10.40" textLength="18.90" lengthAdjust="spacingAndGlyphs" fill="#000">200</text>
<line x1="904.50" y1="737.26" x2="911.00" y2="737.26" stroke="#000" stroke-width="1.5"/>
<text x="876.73" y="740.91" font-size="10.40" textLength="18.90" lengthAdjust="spacingAndGlyphs" fill="#000">210</text>
<line x1="904.50" y1="703.89" x2="911.00" y2="703.89" stroke="#000" stroke-width="1.5"/>
<text x="876.73" y="707.54" font-size="10.40" textLength="18.90" lengthAdjust="spacingAndGlyphs" fill="#000">220</text>
<text x="1046.03" y="849.70" font-size="10.92" textLength="6.35" lengthAdjust="spacingAndGlyphs" fill="#000">Y</text>
<text transform="translate(866.10,750.50) rotate(-90)" x="-17.42" y="0" font-size="10.92" textLength="34.76" lengthAdjust="spacingAndGlyphs" fill="#000">counts</text>
<text transform="translate(1194.30,749.50) rotate(90)" x="-19.45" y="0" font-size="10.92" textLength="38.64" lengthAdjust="spacingAndGlyphs" fill="#000">cut in y</text>
<rect x="1108.6" y="691.7" width="73.1" height="16.2" rx="2" fill="#fff" fill-opacity="0.8" stroke="#d6d6d6" stroke-width="1"/>
<line x1="1111.10" y1="699.70" x2="1133.30" y2="699.70" stroke="#0000ff" stroke-width="1.4"/>
<text x="1136.89" y="702.80" font-size="10.71" textLength="40.54" lengthAdjust="spacingAndGlyphs" fill="#000">x=1024</text>
</svg>
<script>
(function(){
var c=document.getElementById('hm'); if(!c||!c.getContext) return;
var W=570,H=288,ctx=c.getContext('2d'); var img=ctx.createImageData(W,H); var d=img.data;
var s=123456789;
function rnd(){ s^=s<<13; s>>>=0; s^=s>>>17; s^=s<<5; s>>>=0; return s/4294967296; }
function gauss(){ var u=rnd()||1e-9, v=rnd(); return Math.sqrt(-2*Math.log(u))*Math.cos(6.283185307*v); }
var HMOFF=1.0; var VMIN=203.915, VMAX=210.08;
function hot(x){ x=Math.max(0,Math.min(1,x));
 var r = x<0.365079 ? 0.0416+x/0.365079*(1-0.0416) : 1;
 var g = x<0.365079 ? 0 : (x<0.746032 ? (x-0.365079)/(0.746032-0.365079) : 1);
 var b = x<0.746032 ? 0 : (x-0.746032)/(1-0.746032);
 return [r*255,g*255,b*255]; }
var lut=[]; for(var v=180; v<240; v++) lut[v]=hot((v-VMIN)/(VMAX-VMIN));
var pm=[1e-06, 0.0, 8e-06, 3.3e-05, 8.6e-05, 0.000312, 0.000766, 0.002061, 0.005422, 0.010572, 0.020144, 0.038384, 0.062252, 0.096417, 0.108182, 0.127102, 0.127102, 0.115919, 0.096417, 0.074843, 0.048323, 0.029117, 0.021094, 0.007659, 0.003928, 0.00226, 0.000766, 0.000451, 0.00018, 0.000106, 3.7e-05, 2.1e-05, 8e-06, 5e-06, 2.3e-05]; var cum=[],acc=0; for(var i=0;i<pm.length;i++){acc+=pm[i]; cum.push(acc);}
function samp(){ var u=rnd()*acc; for(var i=0;i<cum.length;i++) if(u<=cum[i]) return 190+i; return 224; }
for(var y=0;y<H;y++){
  var row=(H-1-y)*1034/H;  // data row index
  var off=0;
  if(row<5) off=4.5; else if(row<16) off=(16-row)/11*3;
  if(row>=8) off += -1.0*Math.exp(-Math.pow((row-75)/140,2));
  off += HMOFF;
  for(var x=0;x<W;x++){
    var v=samp()+Math.floor(off+rnd());
    var p=lut[Math.max(180,Math.min(239,v))]; var k=(y*W+x)*4;
    d[k]=p[0]; d[k+1]=p[1]; d[k+2]=p[2]; d[k+3]=255;
  }
}
ctx.putImageData(img,0,0);
})();
</script>
</body></html>
